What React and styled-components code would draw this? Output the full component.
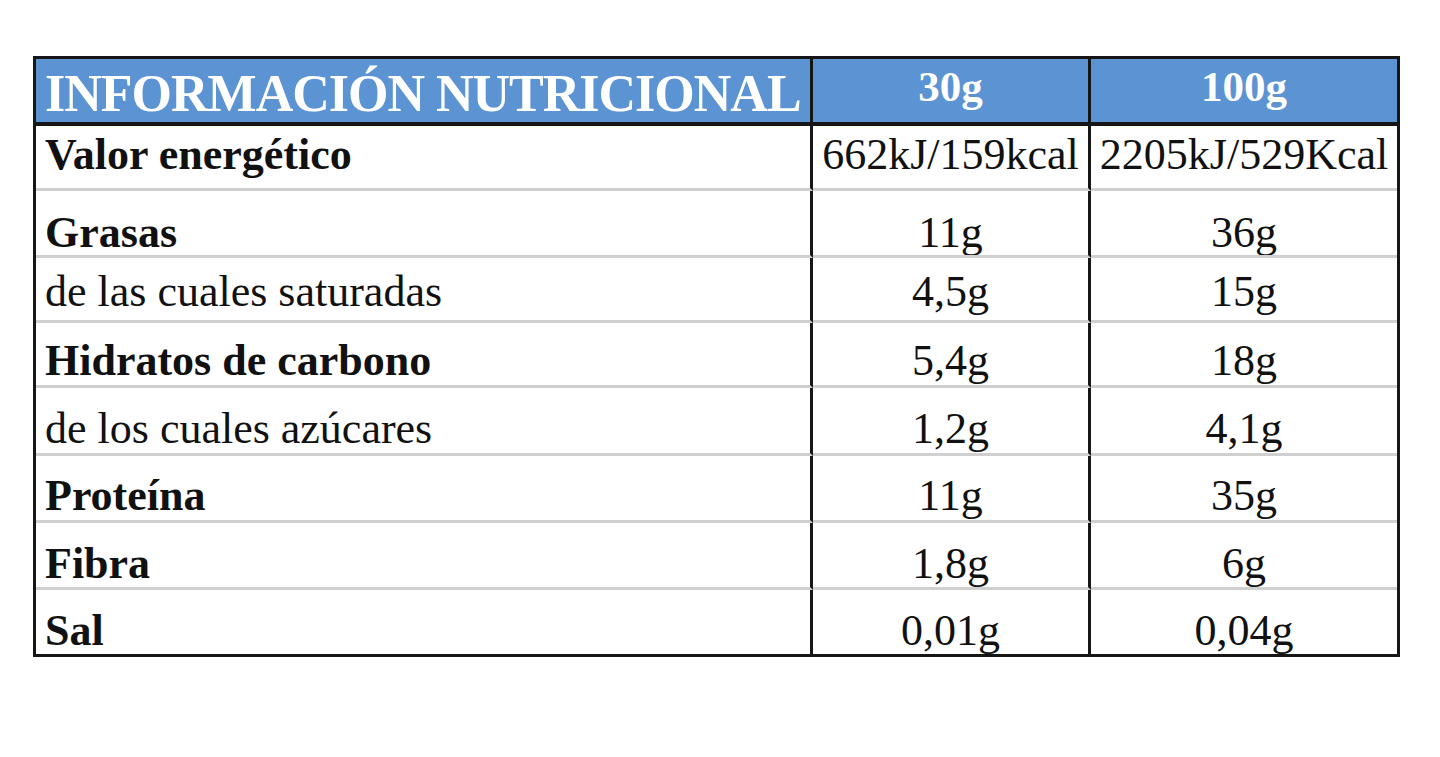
import styled, { createGlobalStyle } from "styled-components";

const GlobalStyle = createGlobalStyle`
  html, body {
    margin: 0;
    padding: 0;
    background: #ffffff;
  }
  body {
    font-family: "Liberation Serif", "Times New Roman", serif;
    color: #111111;
  }
`;

const Page = styled.div`
  width: 1440px;
  height: 757px;
  padding: 56px 0 0 33px;
  box-sizing: border-box;
  overflow: hidden;
`;

const Table = styled.div`
  display: grid;
  grid-template-columns: 777px 278px 306px;
  grid-template-rows: 67px 65px 67px 65px 65px 68px 67px 67px 64px;
  width: 1367px;
  box-sizing: border-box;
  border: 3px solid #161616;
`;

const HeadCell = styled.div`
  background: #5b93d3;
  color: #ffffff;
  font-weight: 700;
  font-size: ${({ $big }) => ($big ? "52px" : "43px")};
  letter-spacing: ${({ $big }) => ($big ? "-1px" : "0")};
  line-height: 1;
  display: flex;
  align-items: center;
  justify-content: ${({ $center }) => ($center ? "center" : "flex-start")};
  padding: ${({ $big }) => ($big ? "6px 0 0 9px" : "0 0 8px 0")};
  border-bottom: 4px solid #161616;
  border-right: ${({ $last }) => ($last ? "none" : "3px solid #161616")};
  white-space: nowrap;
  overflow: hidden;
  box-sizing: border-box;
`;

const Cell = styled.div`
  font-size: 44px;
  line-height: 1;
  font-weight: ${({ $bold }) => ($bold ? 700 : 400)};
  display: flex;
  align-items: flex-end;
  justify-content: ${({ $center }) => ($center ? "center" : "flex-start")};
  padding: 0 0 ${({ $pad }) => $pad}px ${({ $center }) => ($center ? "0" : "9px")};
  border-bottom: ${({ $final }) => ($final ? "none" : "3px solid #d0d0d0")};
  border-right: ${({ $last }) => ($last ? "none" : "3px solid #161616")};
  white-space: nowrap;
  overflow: hidden;
  box-sizing: border-box;
`;

const rows = [
  { label: "Valor energético", bold: true, a: "662kJ/159kcal", b: "2205kJ/529Kcal", pad: 11 },
  { label: "Grasas", bold: true, a: "11g", b: "36g", pad: 0 },
  { label: "de las cuales saturadas", bold: false, a: "4,5g", b: "15g", pad: 6 },
  { label: "Hidratos de carbono", bold: true, a: "5,4g", b: "18g", pad: 2 },
  { label: "de los cuales azúcares", bold: false, a: "1,2g", b: "4,1g", pad: 2 },
  { label: "Proteína", bold: true, a: "11g", b: "35g", pad: 2 },
  { label: "Fibra", bold: true, a: "1,8g", b: "6g", pad: 1 },
  { label: "Sal", bold: true, a: "0,01g", b: "0,04g", pad: 1 },
];

function App() {
  return (
    <>
      <GlobalStyle />
      <Page>
        <Table>
          <HeadCell $big>INFORMACIÓN NUTRICIONAL</HeadCell>
          <HeadCell $center>30g</HeadCell>
          <HeadCell $center $last>100g</HeadCell>
          {rows.map((row, idx) => {
            const final = idx === rows.length - 1;
            return [
              <Cell key={`l${idx}`} $bold={row.bold} $pad={row.pad} $final={final}>
                {row.label}
              </Cell>,
              <Cell key={`a${idx}`} $center $pad={row.pad} $final={final}>
                {row.a}
              </Cell>,
              <Cell key={`b${idx}`} $center $last $pad={row.pad} $final={final}>
                {row.b}
              </Cell>,
            ];
          })}
        </Table>
      </Page>
    </>
  );
}

export default App;
